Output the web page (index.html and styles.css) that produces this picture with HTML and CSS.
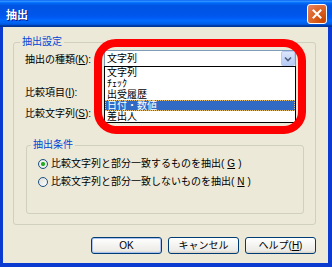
FILE: index.html
```html
<!DOCTYPE html>
<html lang="ja">
<head>
    <meta charset="UTF-8">
    <meta name="viewport" content="width=device-width, initial-scale=1.0">
    <title>抽出</title>
    <link rel="stylesheet" href="styles.css">
</head>
<body>
    <div class="window">
        <div class="titlebar">
            <span class="title">抽出</span>
            <button class="close-btn" aria-label="閉じる">
                <svg width="10" height="10" viewBox="0 0 10 10">
                    <path d="M1.5 1.5 L8.5 8.5 M8.5 1.5 L1.5 8.5" stroke="#fff" stroke-width="2" stroke-linecap="square" fill="none"/>
                </svg>
            </button>
        </div>
        <div class="dialog-body">
            <fieldset class="group">
                <legend>抽出設定</legend>
                <div class="field-row">
                    <label class="field-label">抽出の種類(<u>K</u>):</label>
                    <div class="combo">
                        <span class="combo-text">文字列</span>
                        <span class="combo-arrow">
                            <svg width="8" height="6" viewBox="0 0 8 6">
                                <path d="M1 1.5 L4 4.5 L7 1.5" stroke="#4D6185" stroke-width="1.6" fill="none"/>
                            </svg>
                        </span>
                    </div>
                </div>
                <div class="field-row row-item">
                    <label class="field-label">比較項目(<u>I</u>):</label>
                    <div class="combo"></div>
                </div>
                <div class="field-row row-text">
                    <label class="field-label">比較文字列(<u>S</u>):</label>
                    <div class="combo"></div>
                </div>
                <fieldset class="group inner-group">
                    <legend>抽出条件</legend>
                    <label class="radio"><span class="radio-mark checked"></span>比較文字列と部分一致するものを抽出(<u>G</u>)</label>
                    <label class="radio"><span class="radio-mark"></span>比較文字列と部分一致しないものを抽出(<u>N</u>)</label>
                </fieldset>
            </fieldset>
            <div class="button-row">
                <button class="btn btn-default">OK</button>
                <button class="btn">キャンセル</button>
                <button class="btn">ヘルプ(<u>H</u>)</button>
            </div>

            <!-- open dropdown of the first combo -->
            <ul class="dropdown-list">
                <li>文字列</li>
                <li>ﾁｪｯｸ</li>
                <li>出受履歴</li>
                <li class="selected">日付・数値</li>
                <li>差出人</li>
            </ul>

            <div class="callout-ring"></div>
        </div>
    </div>
</body>
</html>
```

FILE: styles.css
```css
:root {
    --frame-color: #0A3ACF;
    --face-color: #ECE9D8;
    --group-border: #D0D0BF;
    --group-text: #0046D5;
    --field-border: #7F9DB9;
    --select-color: #316AC5;
}

* {
    box-sizing: border-box;
}

body {
    margin: 0;
    font-family: "Liberation Sans", "Noto Sans CJK JP", sans-serif;
    font-size: 10px;
    color: #000;
}

.window {
    width: 332px;
    height: 267px;
    display: flex;
    flex-direction: column;
}

.titlebar {
    height: 27px;
    flex: none;
    display: flex;
    align-items: center;
    justify-content: space-between;
    padding: 0 5px 0 6px;
    background: linear-gradient(to bottom, #0058ee 0%, #3593ff 4%, #288eff 6%, #127dff 8%, #036ffc 10%, #0262ee 14%, #0057e5 20%, #0054e3 24%, #0055eb 56%, #005bf5 66%, #026afe 76%, #0062ef 86%, #0052d6 92%, #0040ab 94%, #003092 100%);
}

.title {
    color: #fff;
    font-weight: bold;
    font-size: 11px;
    text-shadow: 1px 1px #0F1089;
}

.close-btn {
    width: 20px;
    height: 20px;
    padding: 0;
    border: 1px solid #fff;
    border-radius: 3px;
    background: radial-gradient(circle at 85% 85%, #CC4600 0%, #DC6527 55%, #E8856A 100%);
    display: flex;
    align-items: center;
    justify-content: center;
}

.dialog-body {
    flex: 1;
    position: relative;
    background-color: var(--face-color);
    border: solid var(--frame-color);
    border-width: 0 4px 4px 3px;
    padding: 8px 12px 0 10px;
}

.group {
    margin: 0;
    min-width: 0;
    border: 1px solid var(--group-border);
    border-radius: 3px;
    padding: 1px 11px 10px;
}

.group legend {
    color: var(--group-text);
    line-height: 14px;
    padding: 0 2px;
    margin-left: -5px;
}

.field-row {
    display: flex;
    align-items: center;
    height: 17px;
}

.row-item {
    margin-top: 16px;
}

.row-text {
    margin-top: 4px;
}

.field-label {
    width: 79px;
    flex: none;
    white-space: nowrap;
}

.combo {
    width: 192px;
    height: 17px;
    border: 1px solid var(--field-border);
    background-color: #fff;
    display: flex;
    align-items: center;
    justify-content: space-between;
    padding-left: 2px;
}

.combo-text {
    line-height: 15px;
}

.combo-arrow {
    width: 14px;
    height: 15px;
    border: 1px solid #B9CBF3;
    border-radius: 2px;
    background: linear-gradient(to bottom, #DCE6FB, #B6CBF6);
    display: flex;
    align-items: center;
    justify-content: center;
}

.inner-group {
    margin: 17px 0 0 1px;
    padding: 5px 11px 24px;
}

.inner-group legend {
    margin-left: -7px;
}

.radio {
    display: flex;
    align-items: center;
    gap: 3px;
    line-height: 14px;
    white-space: nowrap;
}

.radio + .radio {
    margin-top: 4px;
}

.radio-mark {
    width: 10px;
    height: 10px;
    flex: none;
    border: 1px solid #1C5180;
    border-radius: 50%;
    background: linear-gradient(135deg, #DCDCD7, #fff);
}

.radio-mark.checked {
    background: radial-gradient(circle, #21A121 0, #2FB42F 1.8px, #F4F4F0 2.4px, #DCDCD7 100%);
}

.button-row {
    display: flex;
    justify-content: flex-end;
    gap: 6px;
    margin-top: 12px;
}

.btn {
    width: 71px;
    height: 17px;
    padding: 0;
    font: inherit;
    line-height: 15px;
    color: #000;
    border: 1px solid #003C74;
    border-radius: 3px;
    background: linear-gradient(to bottom, #fff, #ECEBE6 85%, #D6D0C5);
}

.btn-default {
    box-shadow: inset 0 0 0 1px #A9C2F0;
}

.dropdown-list {
    position: absolute;
    left: 101px;
    top: 39px;
    width: 192px;
    margin: 0;
    padding: 0;
    list-style: none;
    background-color: #fff;
    border: 1px solid #000;
}

.dropdown-list li {
    height: 11px;
    line-height: 11px;
    padding-left: 2px;
    white-space: nowrap;
    overflow: hidden;
}

.dropdown-list li.selected {
    background-color: var(--select-color);
    color: #fff;
    outline: 1px dotted #E8C070;
    outline-offset: -1px;
}

.callout-ring {
    position: absolute;
    left: 91px;
    top: 12px;
    width: 212px;
    height: 95px;
    border: 8px solid #FF0000;
    border-radius: 22px;
}
```
